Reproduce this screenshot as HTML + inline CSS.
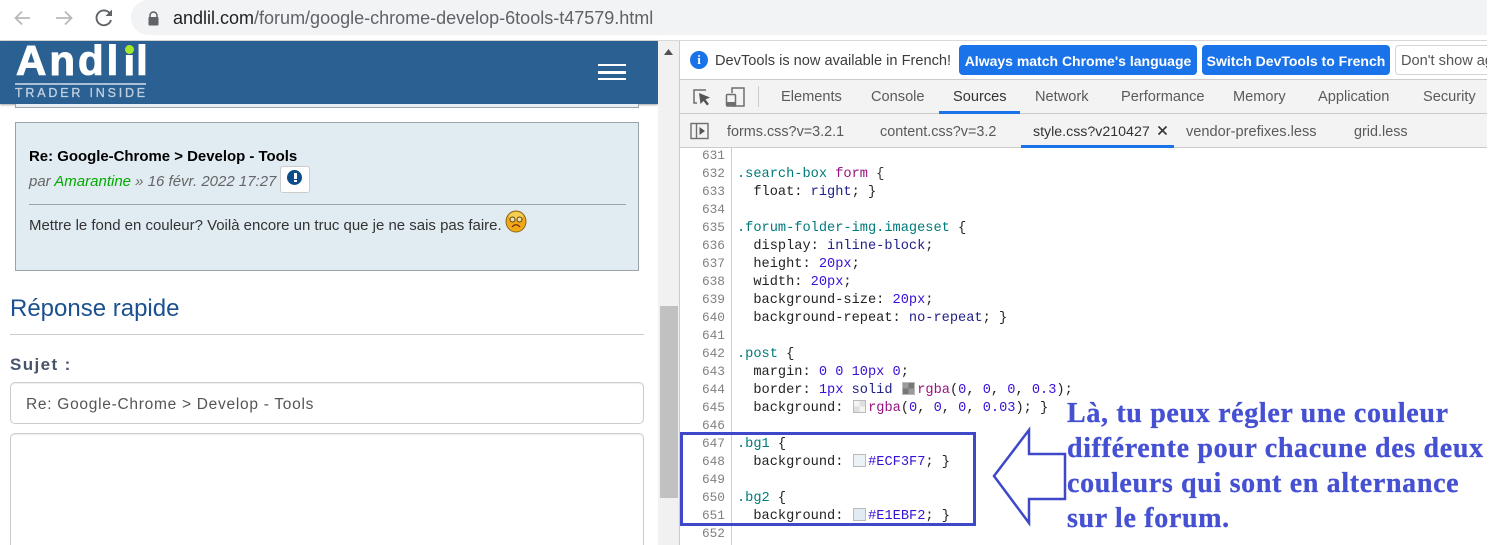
<!DOCTYPE html>
<html><head><meta charset="utf-8"><style>
html,body{margin:0;padding:0;background:#fff}
#p{position:relative;width:1492px;height:545px;overflow:hidden;background:#fff;font-family:"Liberation Sans",sans-serif}
#p div,#p span.a,#p svg.a{position:absolute}
.t{white-space:nowrap}
.c{font-family:"Liberation Mono",monospace;font-size:13.65px;line-height:18px;margin-top:2px;white-space:pre;left:737px;color:#222}
.n{font-family:"Liberation Mono",monospace;font-size:12.8px;line-height:18px;margin-top:1px;left:690px;width:35px;text-align:right;color:#808080}
.s{color:#007a7a}.k{color:#3a10d8}.v{color:#20208a}.m{color:#97137f}.b{color:#333}
.tab{font-size:14.6px;color:#5a5a5a;top:88px;line-height:18px;white-space:nowrap}
.ft{font-size:14.4px;color:#5a5a5a;top:123px;line-height:18px;white-space:nowrap}
.sw{display:inline-block;width:13px;height:13px;border:1px solid #bbb;box-sizing:border-box;vertical-align:-2px;margin:0 2.5px 0 1px}
.bl{left:1067px;font-family:"Liberation Serif",serif;font-weight:bold;font-size:28px;line-height:35px;color:#4550d2;white-space:nowrap;letter-spacing:.66px;-webkit-text-stroke:.3px #4550d2}
.lg{font-size:42px;line-height:50px;top:36px;font-weight:bold;color:#fff;-webkit-text-stroke:1px #fff;white-space:nowrap}
</style></head><body><div id="p">

<!-- browser bar -->
<svg class="a" style="left:0;top:0" width="130" height="36" viewBox="0 0 130 36" fill="none">
<path d="M30 18H16M22 11.5L15.5 18L22 24.5" stroke="#b9b9b9" stroke-width="1.8"/>
<path d="M56 18H71M65 11.5L71.5 18L65 24.5" stroke="#b9b9b9" stroke-width="1.8"/>
<path d="M109.5 13A7.4 7.4 0 1 0 111 20" stroke="#5f6368" stroke-width="1.9"/>
<path d="M112 9.5V16H105.5Z" fill="#5f6368"/>
</svg>
<div style="left:131px;top:0;width:1361px;height:35px;background:#f1f3f4;border-radius:18px 0 0 18px"></div>
<svg class="a" style="left:147px;top:11px" width="13" height="15" viewBox="0 0 13 15">
<path d="M3 7V4.5A3.5 3.5 0 0 1 10 4.5V7" fill="none" stroke="#5f6368" stroke-width="1.5"/><rect x="1.5" y="6" width="10" height="8.5" rx="1" fill="#5f6368"/>
</svg>
<div class="t" style="left:173px;top:8px;font-size:18px;line-height:20px;color:#5f6368"><span style="color:#202124">andlil.com</span>/forum/google-chrome-develop-6tools-t47579.html</div>
<div style="left:0;top:35px;width:1492px;height:6px;background:#fff"></div>
<div style="left:0;top:40px;width:1492px;height:1px;background:#d8d8d8"></div>

<!-- left page -->
<div style="left:0;top:41px;width:658px;height:63px;background:#2b6192;box-shadow:0 1px 2px rgba(0,0,0,.35)"></div>
<div style="left:15px;top:104px;width:622px;height:3px;border:1px solid #9ba3aa;border-top:0;background:#e9eef3"></div>
<div class="lg" style="left:16px;letter-spacing:3px">Andl</div>
<div class="lg" style="left:123.5px;letter-spacing:1px">il</div>
<div style="left:123px;top:41px;width:13px;height:14px;background:#2b6192"></div>
<div style="left:125px;top:45px;width:9px;height:9px;border-radius:50%;background:#a4e82c"></div>
<div style="left:15px;top:83px;width:131px;height:2px;background:#a9c0d6"></div>
<div class="t" style="left:15px;top:86px;font-size:12.5px;line-height:14px;color:#c0d0e0;letter-spacing:2.8px;-webkit-text-stroke:.3px #c0d0e0">TRADER INSIDE</div>
<div style="left:598px;top:64px;width:28px;height:2px;background:#fff"></div>
<div style="left:598px;top:71px;width:28px;height:3px;background:#fff"></div>
<div style="left:598px;top:78px;width:28px;height:2px;background:#fff"></div>

<div style="left:15px;top:122px;width:622px;height:147px;background:#e1ebf2;border:1px solid #9ba3aa"></div>
<div class="t" style="left:29px;top:148px;font-size:14.95px;line-height:18px;font-weight:bold;color:#000">Re: Google-Chrome &gt; Develop - Tools</div>
<div class="t" style="left:29px;top:173px;font-size:15px;line-height:18px;font-style:italic;color:#666">par <span style="color:#00aa00">Amarantine</span> » 16 févr. 2022 17:27</div>
<div style="left:280px;top:166px;width:28px;height:25px;background:#fff;border:1px solid #ccc;border-radius:3px"></div>
<div style="left:287px;top:170px;width:15px;height:15px;border-radius:50%;background:#0f4d8a"></div>
<div style="left:294px;top:173px;width:3px;height:6px;background:#fff"></div>
<div style="left:294px;top:180px;width:3px;height:2px;background:#fff"></div>
<div style="left:29px;top:204px;width:597px;height:1px;background:#9ba3aa"></div>
<div class="t" style="left:29px;top:217px;font-size:14.97px;line-height:18px;color:#333">Mettre le fond en couleur? Voilà encore un truc que je ne sais pas faire.</div>
<svg class="a" style="left:505px;top:210px" width="22" height="23" viewBox="0 0 22 23">
<ellipse cx="11" cy="11.5" rx="10" ry="10.5" fill="#f0a818" stroke="#8a6a18"/>
<ellipse cx="11" cy="6" rx="7" ry="4" fill="#f8d860" opacity=".8"/>
<circle cx="7.5" cy="9.5" r="2.5" fill="#e8e0b0" stroke="#604010"/><circle cx="14.5" cy="9.5" r="2.5" fill="#e8e0b0" stroke="#604010"/>
<path d="M7 17Q11 12.5 15 17" fill="none" stroke="#703010" stroke-width="1.3"/>
</svg>

<div class="t" style="left:10px;top:295px;font-size:24px;line-height:28px;color:#1b5192">Réponse rapide</div>
<div style="left:10px;top:334px;width:634px;height:1px;background:#ccc"></div>
<div class="t" style="left:10px;top:356px;font-size:17px;line-height:18px;font-weight:bold;color:#47556b;letter-spacing:1.4px">Sujet :</div>
<div style="left:10px;top:382px;width:632px;height:40px;border:1px solid #ccc;border-radius:5px;background:#fff;box-shadow:inset 0 1px 1px rgba(0,0,0,.07)"></div>
<div class="t" style="left:26px;top:396px;font-size:15.5px;line-height:18px;color:#555;letter-spacing:.72px">Re: Google-Chrome &gt; Develop - Tools</div>
<div style="left:10px;top:433px;width:632px;height:130px;border:1px solid #ccc;border-radius:5px;background:#fff;box-shadow:inset 0 1px 1px rgba(0,0,0,.07)"></div>

<!-- scrollbar -->
<div style="left:658px;top:41px;width:21px;height:504px;background:#f1f1f1;border-right:1px solid #ccc"></div>
<div style="left:660px;top:306px;width:18px;height:192px;background:#c1c1c1"></div>
<svg class="a" style="left:664px;top:49px" width="9" height="6"><path d="M4.5 0L9 6H0Z" fill="#505050"/></svg>

<!-- devtools -->
<div style="left:680px;top:41px;width:812px;height:504px;background:#fff"></div>
<div style="left:680px;top:79px;width:812px;height:1px;background:#ccc"></div>
<div style="left:680px;top:80px;width:812px;height:34px;background:#f3f3f3"></div>
<div style="left:680px;top:113px;width:812px;height:1px;background:#ccc"></div>
<div style="left:680px;top:114px;width:812px;height:34px;background:#f3f3f3"></div>
<div style="left:680px;top:147px;width:812px;height:1px;background:#ccc"></div>

<div style="left:690px;top:51px;width:18px;height:18px;border-radius:50%;background:#1a73e8"></div>
<div class="t" style="left:690px;top:51px;width:18px;text-align:center;font-size:13px;line-height:18px;font-weight:bold;color:#fff;font-family:'Liberation Serif',serif">i</div>
<div class="t" style="left:715px;top:52px;font-size:14.6px;line-height:18px;color:#3c3c3c">DevTools is now available in French!</div>
<div class="t" style="left:959px;top:45px;width:238px;height:30px;background:#1a73e8;border-radius:4px;color:#fff;font-size:14px;font-weight:bold;line-height:32px;text-align:center">Always match Chrome's language</div>
<div class="t" style="left:1202px;top:45px;width:188px;height:30px;background:#1a73e8;border-radius:4px;color:#fff;font-size:14px;font-weight:bold;line-height:32px;text-align:center">Switch DevTools to French</div>
<div class="t" style="left:1395px;top:45px;width:120px;height:28px;border:1px solid #d5d5d5;border-radius:4px;color:#555;font-size:14.6px;line-height:30px;padding-left:5px;background:#fff">Don't show again</div>

<svg class="a" style="left:690px;top:85px" width="60" height="24" viewBox="0 0 60 24" fill="none">
<path d="M16 5H4V18H7" stroke="#6e6e6e" stroke-width="1.5"/>
<path d="M9 8L20 12.5L15.5 14.5L19 19L17 20.5L13.5 16L10.5 19Z" fill="#555"/>
<path d="M42 8V3H54V21H42" stroke="#6e6e6e" stroke-width="1.5"/>
<rect x="36.5" y="9.5" width="9" height="11.5" rx="1" stroke="#6e6e6e" stroke-width="1.5"/>
<rect x="37" y="17" width="8" height="4" fill="#6e6e6e"/>
</svg>
<div style="left:758px;top:86px;width:1px;height:21px;background:#ccc"></div>
<div class="tab" style="left:781px">Elements</div>
<div class="tab" style="left:871px">Console</div>
<div class="tab" style="left:953px;color:#333">Sources</div>
<div class="tab" style="left:1035px">Network</div>
<div class="tab" style="left:1121px">Performance</div>
<div class="tab" style="left:1233px">Memory</div>
<div class="tab" style="left:1318px">Application</div>
<div class="tab" style="left:1423px">Security</div>
<div style="left:939px;top:111px;width:81px;height:3px;background:#1a73e8"></div>

<svg class="a" style="left:690px;top:122px" width="20" height="18" viewBox="0 0 20 18" fill="none">
<rect x="1" y="1.5" width="17" height="15" stroke="#6e6e6e" stroke-width="1.4"/>
<path d="M6.5 1.5V16.5" stroke="#6e6e6e" stroke-width="1.4"/>
<path d="M9.5 5L15 9L9.5 13Z" fill="#555"/>
</svg>
<div class="ft" style="left:727px">forms.css?v=3.2.1</div>
<div class="ft" style="left:880px">content.css?v=3.2</div>
<div class="ft" style="left:1033px;color:#333;font-size:14.2px">style.css?v210427</div>
<div class="ft" style="left:1186px;font-size:14.6px">vendor-prefixes.less</div>
<div class="ft" style="left:1354px">grid.less</div>
<svg class="a" style="left:1157px;top:125px" width="11" height="11"><path d="M1.5 1.5L9.5 9.5M9.5 1.5L1.5 9.5" stroke="#333" stroke-width="1.6"/></svg>
<div style="left:1021px;top:145px;width:153px;height:3px;background:#1a73e8"></div>
<div style="left:731px;top:148px;width:1px;height:397px;background:#ccc"></div>

<!-- line numbers -->
<div class="n" style="top:146px">631</div><div class="n" style="top:164px">632</div><div class="n" style="top:182px">633</div><div class="n" style="top:200px">634</div><div class="n" style="top:218px">635</div><div class="n" style="top:236px">636</div><div class="n" style="top:254px">637</div><div class="n" style="top:272px">638</div><div class="n" style="top:290px">639</div><div class="n" style="top:308px">640</div><div class="n" style="top:326px">641</div><div class="n" style="top:344px">642</div><div class="n" style="top:362px">643</div><div class="n" style="top:380px">644</div><div class="n" style="top:398px">645</div><div class="n" style="top:416px">646</div><div class="n" style="top:434px">647</div><div class="n" style="top:452px">648</div><div class="n" style="top:470px">649</div><div class="n" style="top:488px">650</div><div class="n" style="top:506px">651</div><div class="n" style="top:524px">652</div>

<!-- code -->
<div class="c" style="top:164px"><span class="s">.search-box</span> <span class="m">form</span> <span class="b">{</span></div>
<div class="c" style="top:182px">  float: <span class="v">right</span>; }</div>
<div class="c" style="top:218px"><span class="s">.forum-folder-img.imageset</span> {</div>
<div class="c" style="top:236px">  display: <span class="v">inline-block</span>;</div>
<div class="c" style="top:254px">  height: <span class="k">20px</span>;</div>
<div class="c" style="top:272px">  width: <span class="k">20px</span>;</div>
<div class="c" style="top:290px">  background-size: <span class="k">20px</span>;</div>
<div class="c" style="top:308px">  background-repeat: <span class="v">no-repeat</span>; }</div>
<div class="c" style="top:344px"><span class="s">.post</span> {</div>
<div class="c" style="top:362px">  margin: <span class="k">0 0 10px 0</span>;</div>
<div class="c" style="top:380px">  border: <span class="k">1px</span> <span class="v">solid</span> <span class="sw" style="background:conic-gradient(#777 25%,#9a9a9a 0 50%,#777 0 75%,#9a9a9a 0) 0 0/11px 11px"></span><span class="m">rgba</span>(<span class="k">0</span>, <span class="k">0</span>, <span class="k">0</span>, <span class="k">0.3</span>);</div>
<div class="c" style="top:398px">  background: <span class="sw" style="background:conic-gradient(#dedede 25%,#f4f4f4 0 50%,#dedede 0 75%,#f4f4f4 0) 0 0/11px 11px"></span><span class="m">rgba</span>(<span class="k">0</span>, <span class="k">0</span>, <span class="k">0</span>, <span class="k">0.03</span>); }</div>
<div class="c" style="top:434px"><span class="s">.bg1</span> {</div>
<div class="c" style="top:452px">  background: <span class="sw" style="background:#ecf3f7"></span><span class="k">#ECF3F7</span>; }</div>
<div class="c" style="top:488px"><span class="s">.bg2</span> {</div>
<div class="c" style="top:506px">  background: <span class="sw" style="background:#e1ebf2"></span><span class="k">#E1EBF2</span>; }</div>

<!-- annotations -->
<div style="left:680px;top:432px;width:290px;height:88px;border:3px solid #3e48c8"></div>
<svg class="a" style="left:990px;top:426px" width="80" height="102" viewBox="0 0 80 102" fill="none">
<path d="M39 4V28H75V73H39V97L4 50Z" fill="#fff" stroke="#3e48c8" stroke-width="2.5"/>
</svg>
<div class="bl" style="top:396px">Là, tu peux régler une couleur</div>
<div class="bl" style="top:431px">différente pour chacune des deux</div>
<div class="bl" style="top:466px">couleurs qui sont en alternance</div>
<div class="bl" style="top:501px">sur le forum.</div>

<div style="left:1487px;top:0;width:5px;height:545px;background:#fff"></div>
</div></body></html>
